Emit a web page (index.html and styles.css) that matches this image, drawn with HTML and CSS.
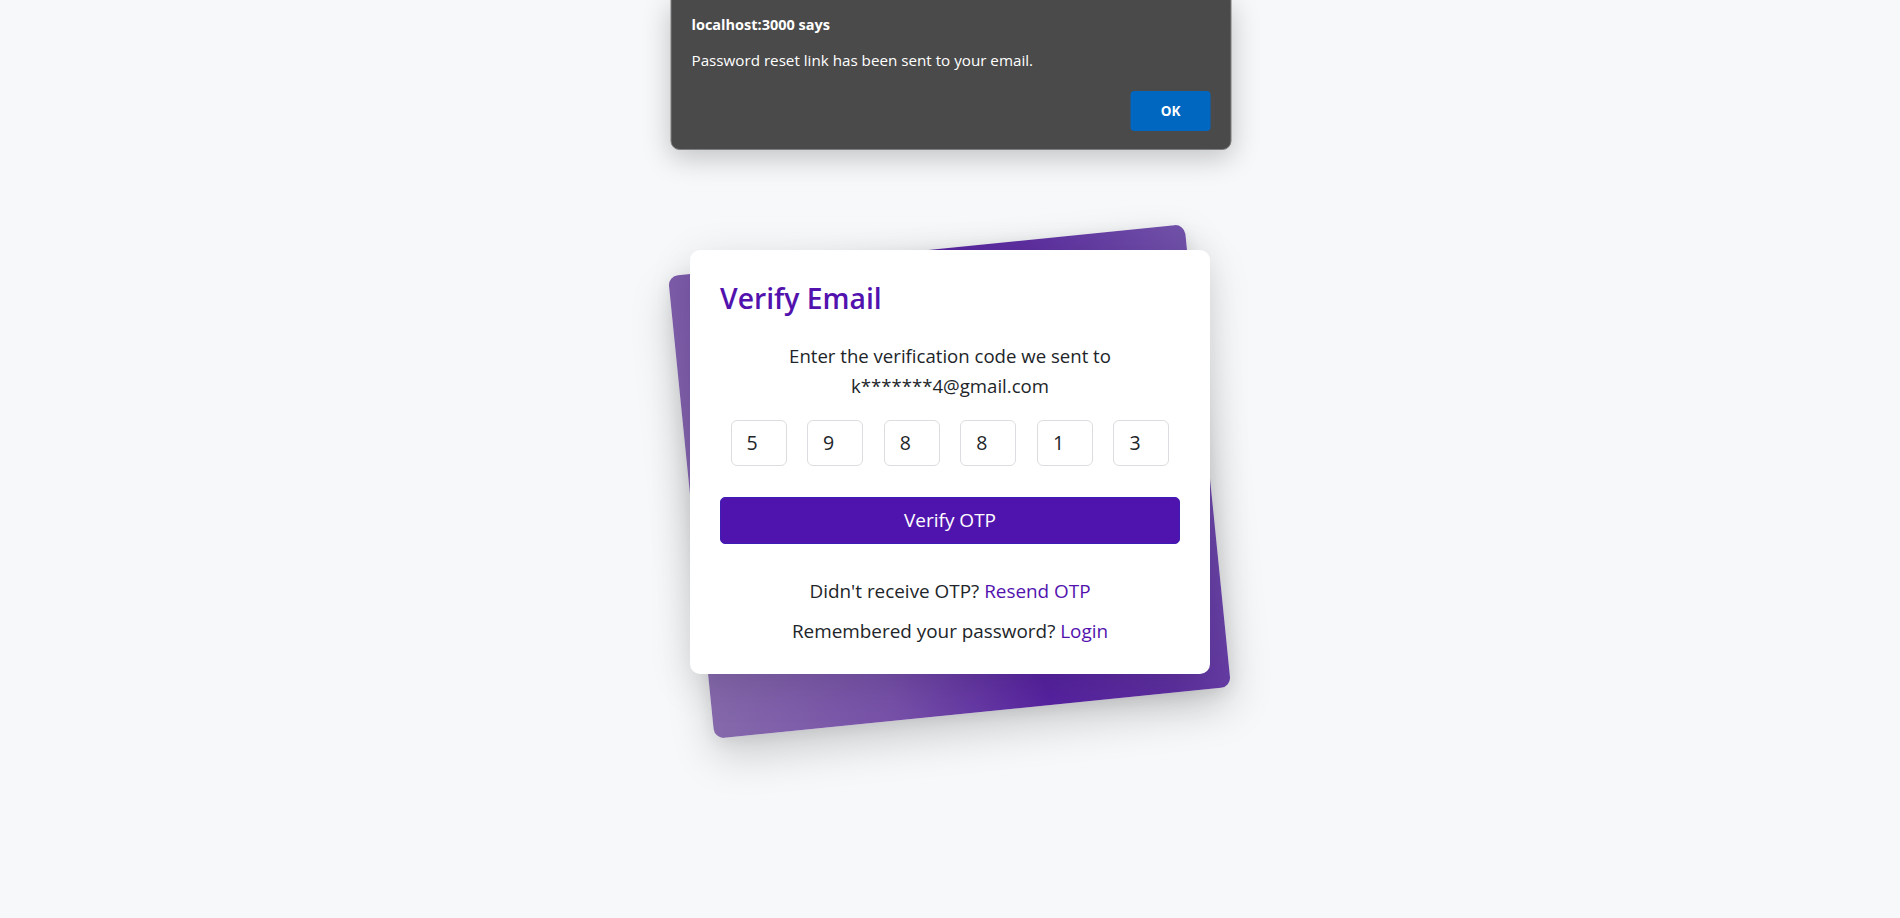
FILE: index.html
```html
<!DOCTYPE html>
<html lang="en">
<head>
<meta charset="utf-8">
<title>Verify Email</title>
<link rel="stylesheet" href="styles.css">
</head>
<body>
  <main class="page">
    <div class="stack">
      <div class="backdrop"></div>
      <section class="card">
        <h2 class="card-title">Verify Email</h2>
        <p class="lead">Enter the verification code we sent to<br>k*******4@gmail.com</p>
        <div class="otp">
          <input class="otp-box" type="text" value="5" maxlength="1">
          <input class="otp-box" type="text" value="9" maxlength="1">
          <input class="otp-box" type="text" value="8" maxlength="1">
          <input class="otp-box" type="text" value="8" maxlength="1">
          <input class="otp-box" type="text" value="1" maxlength="1">
          <input class="otp-box" type="text" value="3" maxlength="1">
        </div>
        <button class="btn-verify" type="button">Verify OTP</button>
        <p class="links first">Didn't receive OTP? <a href="#">Resend OTP</a></p>
        <p class="links">Remembered your password? <a href="#">Login</a></p>
      </section>
    </div>
  </main>

  <div class="alert" role="alertdialog">
    <div class="alert-title">localhost:3000 says</div>
    <div class="alert-msg">Password reset link has been sent to your email.</div>
    <div class="alert-actions">
      <button class="alert-ok" type="button">OK</button>
    </div>
  </div>
</body>
</html>
```

FILE: styles.css
```css
* { box-sizing: border-box; }

html, body {
  margin: 0;
  padding: 0;
}

body {
  background: #f7f8fa;
  font-family: "Segoe UI", "Open Sans", "Noto Sans", sans-serif;
  color: #212529;
  height: 918px;
  overflow: hidden;
}

.page {
  height: 918px;
  display: flex;
  align-items: center;
  justify-content: center;
  padding-top: 5px;
}

.stack {
  position: relative;
  width: 520px;
}

.backdrop {
  position: absolute;
  top: -1px;
  left: 0;
  right: 1px;
  bottom: -40px;
  border-radius: 10px;
  transform: rotate(-5.75deg);
  background: linear-gradient(78deg, #8569ab 0%, #7650a8 30%, #5622a0 55%, #5e30a0 75%, #7152a9 100%);
  box-shadow: 0 18px 44px rgba(0, 0, 0, 0.18), 0 4px 16px rgba(0, 0, 0, 0.07);
}

.card {
  position: relative;
  background: #ffffff;
  border-radius: 10px;
  padding: 30px 30px 29px;
  box-shadow: 0 10px 44px rgba(0, 0, 0, 0.12);
}

.card-title {
  margin: 0;
  font-size: 28.3px;
  line-height: 36px;
  font-weight: 600;
  color: #5212ae;
}

.lead {
  margin: 25px 0 0;
  text-align: center;
  font-size: 18.6px;
  line-height: 30px;
}

.otp {
  margin-top: 19px;
  display: flex;
  justify-content: center;
  gap: 20.6px;
}

.otp-box {
  width: 56px;
  height: 46px;
  border: 1px solid #dcdde0;
  border-radius: 6px;
  padding: 0 0 0 15px;
  font-family: inherit;
  font-size: 19.5px;
  color: #212529;
  background: #fff;
  outline: none;
}

.btn-verify {
  display: block;
  width: 100%;
  height: 47px;
  margin-top: 31px;
  border: 1px solid #3c1db6;
  border-radius: 5px;
  background: #5014ae;
  color: #ffffff;
  font-family: inherit;
  font-size: 19px;
}

.links {
  margin: 12px 0 0;
  text-align: center;
  font-size: 18.9px;
  line-height: 28px;
}

.links.first {
  margin-top: 33px;
}

.links a {
  color: #5212ae;
  text-decoration: none;
}

.alert {
  position: absolute;
  top: -2px;
  left: 50%;
  transform: translateX(-50%);
  margin-left: 1px;
  width: 561px;
  height: 152px;
  background: #4a4a4a;
  border: 1px solid #7e7e7e;
  border-radius: 0 0 9px 9px;
  box-shadow: 0 8px 28px rgba(0, 0, 0, 0.22);
  padding: 16px 20px 20px 20px;
  color: #ffffff;
  font-family: "Segoe UI", "Open Sans", "Noto Sans", sans-serif;
}

.alert-title {
  font-size: 14.5px;
  font-weight: 700;
  line-height: 20px;
}

.alert-msg {
  margin-top: 15px;
  font-size: 15.2px;
  line-height: 20px;
}

.alert-actions {
  margin-top: 21px;
  display: flex;
  justify-content: flex-end;
}

.alert-ok {
  width: 80px;
  height: 40px;
  border: none;
  border-radius: 4px;
  background: #0067c0;
  color: #ffffff;
  font-family: inherit;
  font-size: 13.5px;
  font-weight: 700;
}
```
